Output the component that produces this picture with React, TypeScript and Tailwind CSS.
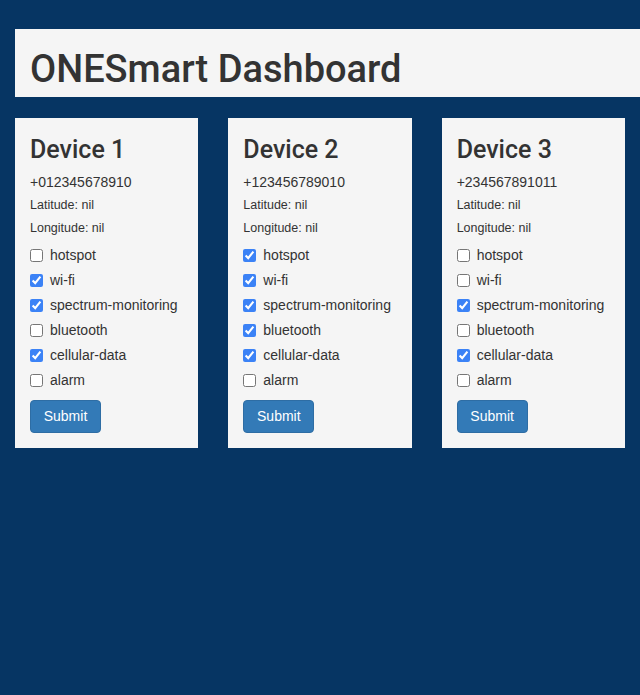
import { useState } from "react";

interface Device {
  id: number;
  name: string;
  phone: string;
  latitude: string;
  longitude: string;
  features: Record<string, boolean>;
}

const FEATURES = [
  "hotspot",
  "wi-fi",
  "spectrum-monitoring",
  "bluetooth",
  "cellular-data",
  "alarm",
];

const initialDevices: Device[] = [
  {
    id: 1,
    name: "Device 1",
    phone: "+012345678910",
    latitude: "nil",
    longitude: "nil",
    features: {
      hotspot: false,
      "wi-fi": true,
      "spectrum-monitoring": true,
      bluetooth: false,
      "cellular-data": true,
      alarm: false,
    },
  },
  {
    id: 2,
    name: "Device 2",
    phone: "+123456789010",
    latitude: "nil",
    longitude: "nil",
    features: {
      hotspot: true,
      "wi-fi": true,
      "spectrum-monitoring": true,
      bluetooth: true,
      "cellular-data": true,
      alarm: false,
    },
  },
  {
    id: 3,
    name: "Device 3",
    phone: "+234567891011",
    latitude: "nil",
    longitude: "nil",
    features: {
      hotspot: false,
      "wi-fi": false,
      "spectrum-monitoring": true,
      bluetooth: false,
      "cellular-data": true,
      alarm: false,
    },
  },
];

const headingFont = { fontFamily: "Roboto, 'Liberation Sans', sans-serif" };

function DeviceCard({ device }: { device: Device }) {
  const [features, setFeatures] = useState(device.features);

  function toggle(name: string) {
    setFeatures((prev) => ({ ...prev, [name]: !prev[name] }));
  }

  return (
    <div className="px-[15px]">
      <div className="bg-[#f5f5f5] px-[15px] pt-[19px] pb-[15px]">
        <h3
          className="text-[25px] leading-[26px] font-medium"
          style={headingFont}
        >
          {device.name}
        </h3>
        <p className="mt-[9px] text-[14px] leading-[20px]">{device.phone}</p>
        <p className="text-[12.5px] leading-[23px] mt-[1.5px]">
          Latitude: {device.latitude}
        </p>
        <p className="text-[12.5px] leading-[23px]">
          Longitude: {device.longitude}
        </p>
        <div className="mt-[3px]">
          {FEATURES.map((f) => (
            <label
              key={f}
              className="flex h-[25px] items-center gap-[7px] text-[14px]"
            >
              <input
                type="checkbox"
                checked={features[f]}
                onChange={() => toggle(f)}
                className="m-0 h-[13px] w-[13px] accent-[#3b82f6]"
              />
              <span>{f}</span>
            </label>
          ))}
        </div>
        <button className="mt-[7.5px] h-[33px] w-[71px] rounded-[4px] border border-[#2e6da4] bg-[#337ab7] text-[14px] text-white">
          Submit
        </button>
      </div>
    </div>
  );
}

export default function App() {
  return (
    <div
      className="min-h-screen bg-[#063563] pt-[29px] text-[#333]"
      style={{ fontFamily: '"Liberation Sans", Arial, sans-serif' }}
    >
      <div className="ml-[15px] flex h-[68px] items-center bg-[#f5f5f5] px-[15px]">
        <h1
          className="mt-[12px] text-[38px] font-medium leading-none"
          style={headingFont}
        >
          ONESmart Dashboard
        </h1>
      </div>
      <div className="mt-[21px] grid grid-cols-3">
        {initialDevices.map((d) => (
          <DeviceCard key={d.id} device={d} />
        ))}
      </div>
    </div>
  );
}
